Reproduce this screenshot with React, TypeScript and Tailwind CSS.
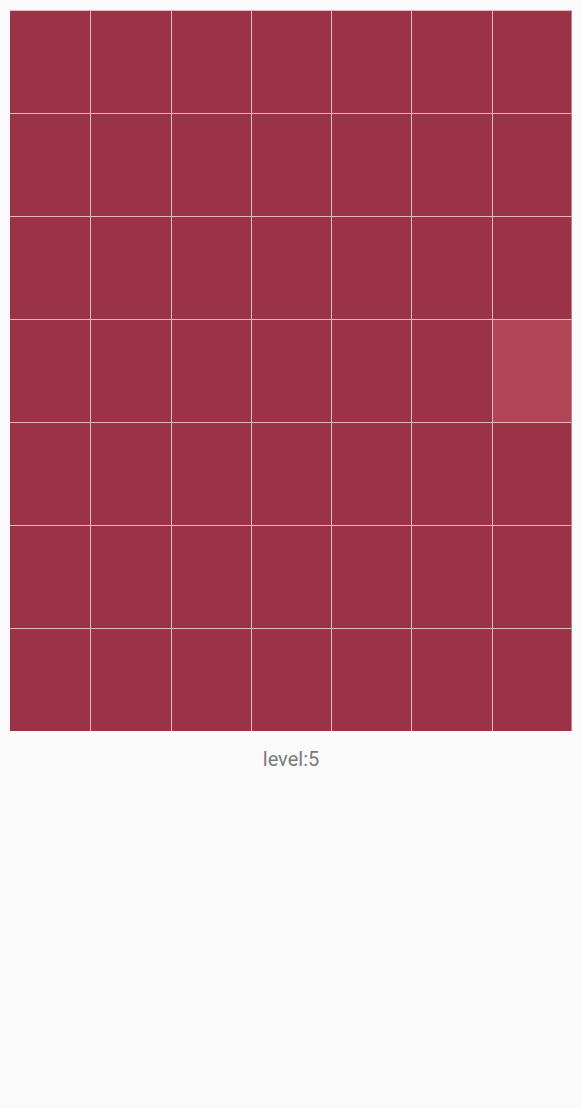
import React from "react";

export default function App() {
  const cells = Array.from({ length: 49 }, (_, i) => i);
  return (
    <div className="min-h-[1108px] w-[582px] bg-[#fafafa] p-[10px]" style={{ fontFamily: "Roboto, 'Liberation Sans', sans-serif" }}>
      <div className="grid grid-cols-7 w-[562px]">
        {cells.map((i) => {
          const col = i % 7;
          const hi = i === 27;
          return (
            <div
              key={i}
              className={`h-[103px] border-t border-[#e4b6be] ${col > 0 ? "border-l" : ""} ${col === 6 ? "border-r border-r-[#c77888]" : ""} ${hi ? "bg-[#b04656]" : "bg-[#9a3346]"}`}
            />
          );
        })}
      </div>
      <div className="mt-[16px] text-center text-[20px] leading-[24px] text-[#7a7a7a]">level:5</div>
    </div>
  );
}
